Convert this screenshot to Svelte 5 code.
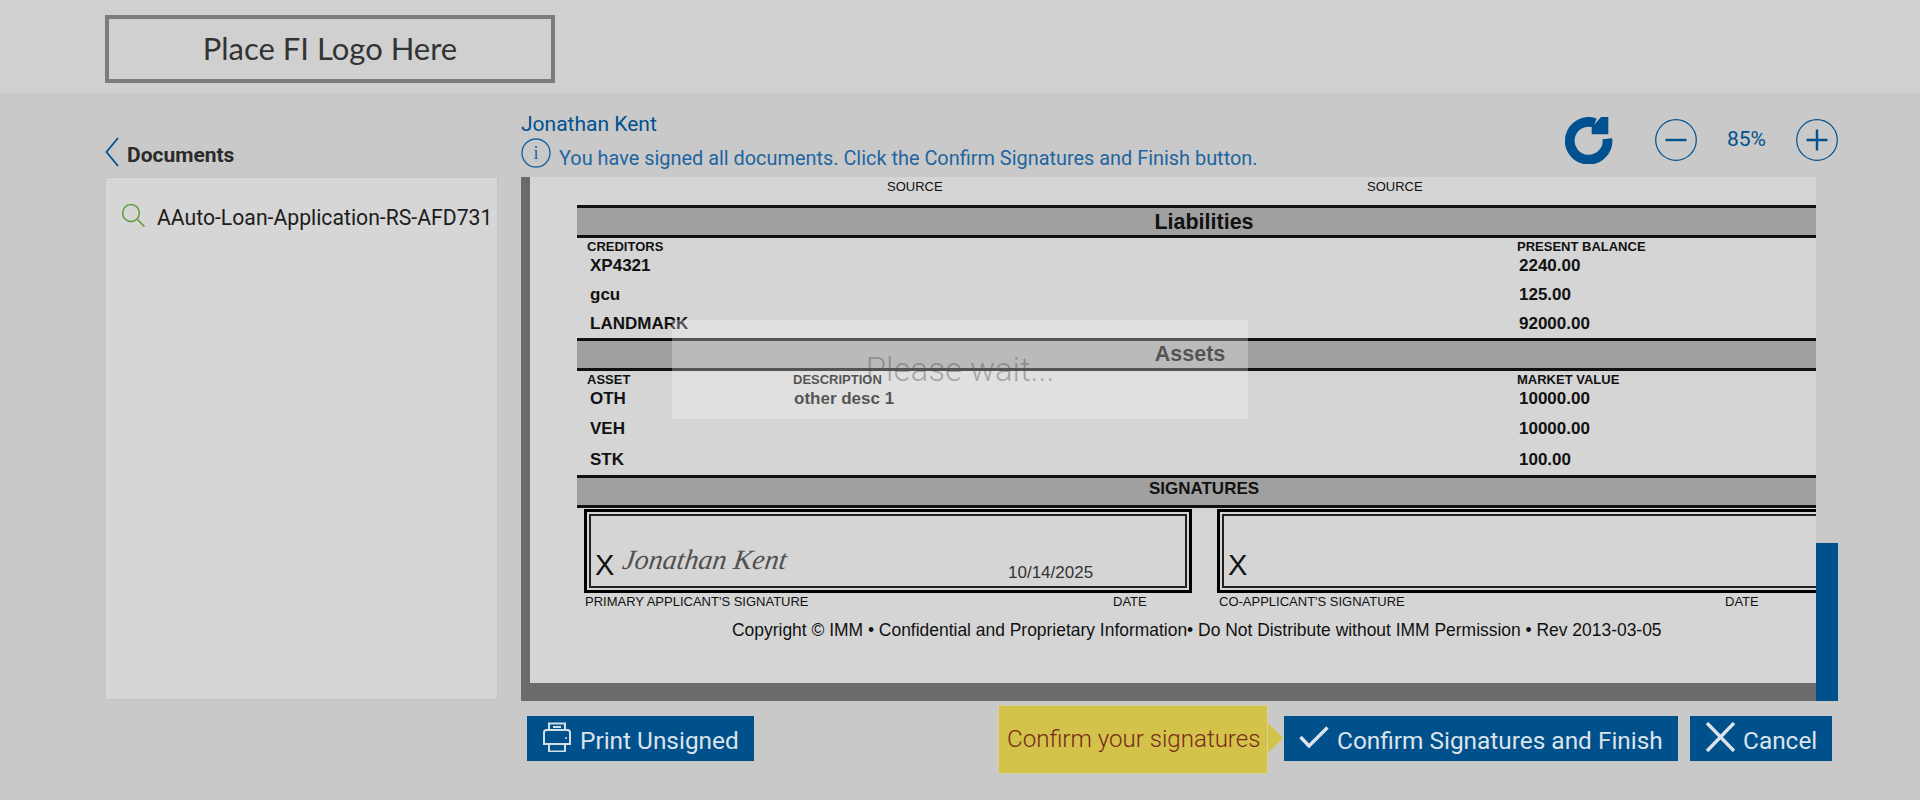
<script>
  const creditors = [
    { name: 'XP4321', value: '2240.00' },
    { name: 'gcu', value: '125.00' },
    { name: 'LANDMARK', value: '92000.00' }
  ];
  const assets = [
    { name: 'OTH', desc: 'other desc 1', value: '10000.00' },
    { name: 'VEH', desc: '', value: '10000.00' },
    { name: 'STK', desc: '', value: '100.00' }
  ];
</script>

<header class="top">
  <div class="logo">Place FI Logo Here</div>
</header>

<main class="page">
  <aside class="side">
    <div class="side-head">
      <svg class="chevron" viewBox="0 0 14 30" width="14" height="30">
        <path d="M13 1 1.500 15 13 29" fill="none" stroke="#00518f" stroke-width="1.8" />
      </svg>
      <span>Documents</span>
    </div>
    <div class="side-panel">
      <div class="doc-item">
        <svg viewBox="0 0 24 24" width="24" height="24">
          <circle cx="10" cy="10" r="8.4" fill="none" stroke="#5f9a3c" stroke-width="1.5" />
          <path d="m16 16 7.4 7.6" fill="none" stroke="#5f9a3c" stroke-width="1.5" />
        </svg>
        <span>AAuto-Loan-Application-RS-AFD731</span>
      </div>
    </div>
  </aside>

  <section class="content">
    <div class="content-head">
      <div class="who">
        <div class="name">Jonathan Kent</div>
        <div class="msg">
          <svg viewBox="0 0 30 30" width="30" height="30">
            <circle cx="15" cy="15" r="14" fill="none" stroke="#1f659f" stroke-width="1.4" />
            <text x="15" y="21" text-anchor="middle" class="info-i">i</text>
          </svg>
          <span>You have signed all documents. Click the Confirm Signatures and Finish button.</span>
        </div>
      </div>
      <div class="tools">
        <svg class="refresh" viewBox="0 0 48 47" width="48" height="47">
          <path d="M42.400 21.700A18.900 18.900 0 1 1 30 6" fill="none" stroke="#00518f" stroke-width="9.700" />
          <path d="M36 0h7.300v17.300H26.700v-6.600z" fill="#00518f" />
        </svg>
        <svg class="round" viewBox="0 0 42 42" width="42" height="42">
          <circle cx="21" cy="21" r="20.3" fill="none" stroke="#00518f" stroke-width="1.2" />
          <path d="M10.500 21h21" stroke="#00518f" stroke-width="2.4" />
        </svg>
        <span class="pct">85%</span>
        <svg class="round" viewBox="0 0 42 42" width="42" height="42">
          <circle cx="21" cy="21" r="20.3" fill="none" stroke="#00518f" stroke-width="1.2" />
          <path d="M10.500 21h21M21 10.500v21" stroke="#00518f" stroke-width="2.4" />
        </svg>
      </div>
    </div>

    <div class="viewer">
      <div class="doc-frame">
        <div class="doc">
          <div class="source-row"><span>SOURCE</span><span>SOURCE</span></div>

          <div class="bar liab-bar"><span class="big">Liabilities</span></div>
          <div class="cols labels"><span>CREDITORS</span><span></span><span>PRESENT BALANCE</span></div>
          {#each creditors as row}
            <div class="cols val"><span>{row.name}</span><span></span><span>{row.value}</span></div>
          {/each}

          <div class="bar assets-bar"><span class="big">Assets</span></div>
          <div class="cols labels"><span>ASSET</span><span>DESCRIPTION</span><span>MARKET VALUE</span></div>
          {#each assets as row}
            <div class="cols val tall"><span>{row.name}</span><span>{row.desc}</span><span>{row.value}</span></div>
          {/each}

          <div class="bar sig-bar"><span class="mid">SIGNATURES</span></div>

          <div class="sig-row">
            <div class="sig-col">
              <div class="sig-box">
                <div class="sig-inner">
                  <span class="x">X</span>
                  <span class="signed">Jonathan Kent</span>
                  <span class="date">10/14/2025</span>
                </div>
              </div>
              <div class="caption"><span>PRIMARY APPLICANT'S SIGNATURE</span><span>DATE</span></div>
            </div>
            <div class="sig-col">
              <div class="sig-box">
                <div class="sig-inner">
                  <span class="x">X</span>
                </div>
              </div>
              <div class="caption co"><span>CO-APPLICANT'S SIGNATURE</span><span>DATE</span></div>
            </div>
          </div>

          <p class="copy">Copyright © IMM • Confidential and Proprietary Information• Do Not Distribute without IMM Permission • Rev 2013-03-05</p>
        </div>
      </div>

      <div class="scroll"><div class="thumb"></div></div>

      <div class="wait">Please wait...</div>
    </div>

    <div class="actions">
      <button class="btn print">
        <svg viewBox="0 0 30 30" width="30" height="30">
          <path d="M7 8V1.500h16V8M7 22H2V10.500Q2 8 4.500 8h21Q28 8 28 10.500V22h-5" fill="none" stroke="#d5dde6" stroke-width="2" />
          <path d="M7 22h16v7.500H7zM11 5h8" fill="none" stroke="#d5dde6" stroke-width="2" />
          <circle cx="24" cy="16" r="1" fill="#d5dde6" />
        </svg>
        <span class="label">Print Unsigned</span>
      </button>
      <div class="hint">Confirm your signatures</div>
      <button class="btn confirm">
        <svg viewBox="0 0 30 22" width="30" height="22">
          <path d="M1.500 11 10 20 28.500 1.500" fill="none" stroke="#dde3ea" stroke-width="3.400" />
        </svg>
        <span class="label">Confirm Signatures and Finish</span>
      </button>
      <button class="btn cancel">
        <svg viewBox="0 0 31 30" width="31" height="30">
          <path d="M2 1l27 28M29 1 2 29" fill="none" stroke="#dde3ea" stroke-width="3.400" />
        </svg>
        <span class="label">Cancel</span>
      </button>
    </div>
  </section>
</main>

<style>
  :global(body) {
    background: #c9c9c9;
    font-family: Roboto, sans-serif;
  }

  .top {
    height: 93px;
    box-sizing: border-box;
    padding: 15px 0 0 105px;
    background: #d0d0d0;
  }

  .logo {
    width: 450px;
    height: 68px;
    box-sizing: border-box;
    border: 4px solid #7b7b7b;
    padding-bottom: 2px;
    display: flex;
    align-items: center;
    justify-content: center;
    font-family: Lato, sans-serif;
    font-size: 31px;
    color: #333;
  }

  .page {
    display: grid;
    grid-template-columns: 393px 1317px;
    gap: 23px;
    padding-left: 105px;
    height: 707px;
    overflow: hidden;
  }

  .side-head {
    height: 84px;
    box-sizing: border-box;
    padding-top: 43px;
    display: flex;
    align-items: flex-start;
    gap: 8px;
    font-size: 21px;
    font-weight: 700;
    color: #2b2b2b;
    line-height: 38px;
  }

  .chevron {
    margin-top: 1px;
    flex: none;
  }

  .side-panel {
    height: 523px;
    box-sizing: border-box;
    background: #d6d6d6;
    border: 1px solid #c2c2c2;
    padding: 25px 0 0 15px;
  }

  .doc-item {
    display: flex;
    align-items: center;
    gap: 12px;
    font-size: 21.200px;
    white-space: nowrap;
    color: #1c1c1c;
  }

  .doc-item svg {
    margin-bottom: 4px;
  }

  .content-head {
    height: 84px;
    display: flex;
    justify-content: space-between;
  }

  .name {
    margin-top: 19px;
    font-size: 21px;
    line-height: 24px;
    color: #00518f;
  }

  .msg {
    margin-top: 2px;
    display: flex;
    align-items: flex-start;
    gap: 8px;
    font-size: 19.900px;
    line-height: 36px;
    color: #1f659f;
  }

  .msg span {
    padding-top: 3px;
  }

  .info-i {
    font-family: "Liberation Serif", serif;
    font-size: 18px;
    fill: #1f659f;
  }

  .tools {
    display: flex;
    align-items: flex-start;
    padding-top: 24px;
  }

  .refresh {
    margin-right: 42px;
  }

  .round {
    margin-top: 2px;
  }

  .pct {
    width: 99px;
    text-align: center;
    font-size: 21px;
    line-height: 44px;
    color: #00518f;
  }

  .viewer {
    position: relative;
    display: flex;
    height: 524px;
  }

  .doc-frame {
    flex: 1;
    min-width: 0;
    overflow: hidden;
    background: #d5d5d5;
    border-left: 9px solid #6b6b6b;
    border-bottom: 18px solid #6b6b6b;
  }

  .doc {
    width: 1254px;
    margin-left: 47px;
    font-family: "Liberation Sans", Arial, sans-serif;
    color: #111;
  }

  .source-row {
    height: 28px;
    line-height: 20px;
    font-size: 13px;
    display: grid;
    grid-template-columns: 480px auto;
    padding-left: 310px;
  }

  .bar {
    height: 33px;
    box-sizing: border-box;
    background: #a0a0a0;
    border-top: 3px solid #111;
    border-bottom: 3px solid #111;
    display: flex;
    align-items: center;
    justify-content: center;
    font-weight: 700;
  }

  .liab-bar {
    padding-top: 2px;
  }

  .assets-bar {
    padding-right: 28px;
  }

  .sig-bar {
    padding-bottom: 4px;
  }

  .big {
    font-size: 21.500px;
  }

  .mid {
    font-size: 17px;
  }

  .cols {
    display: grid;
    grid-template-columns: 206px 724px auto;
    white-space: nowrap;
    font-weight: 700;
    padding-left: 10px;
  }

  .labels {
    height: 13px;
    line-height: 18px;
    font-size: 13px;
  }

  .val {
    height: 29px;
    align-items: center;
    font-size: 17px;
    padding-left: 13px;
    grid-template-columns: 204px 725px auto;
  }

  .tall {
    height: 30.333px;
  }

  .sig-row {
    display: flex;
    gap: 25px;
    padding: 1px 0 0 7px;
  }

  .sig-col {
    width: 608px;
    flex: none;
  }

  .sig-box {
    height: 84px;
    box-sizing: border-box;
    border: 3px solid #000;
    padding: 2px;
  }

  .sig-inner {
    height: 100%;
    box-sizing: border-box;
    border: 2px solid #222;
    padding: 0 0 0 4px;
    display: grid;
    grid-template-columns: 27px 386px auto;
    align-items: end;
    white-space: nowrap;
  }

  .x {
    font-size: 29px;
    line-height: 34px;
    padding-bottom: 4px;
  }

  .signed {
    font-family: "Liberation Serif", serif;
    font-style: italic;
    font-size: 28px;
    line-height: 38px;
    color: #505050;
    margin-left: -3px;
    padding-bottom: 7px;
    transform: skewX(-8deg);
    transform-origin: left bottom;
  }

  .date {
    font-size: 17px;
    line-height: 20px;
    color: #333;
    padding-bottom: 3px;
  }

  .caption {
    display: grid;
    grid-template-columns: 528px auto;
    font-size: 13px;
    line-height: 18px;
    padding-left: 1px;
    white-space: nowrap;
  }

  .co {
    grid-template-columns: 506px auto;
    padding-left: 2px;
  }

  .copy {
    margin: 9px 0 0;
    padding-left: 155px;
    font-size: 17.440px;
    line-height: 20px;
    white-space: nowrap;
  }

  .scroll {
    width: 22px;
    flex: none;
    display: flex;
    align-items: flex-end;
  }

  .thumb {
    width: 100%;
    height: 158px;
    background: #00508c;
  }

  .wait {
    position: absolute;
    left: 151px;
    top: 143px;
    width: 576px;
    height: 99px;
    box-sizing: border-box;
    padding-top: 30px;
    background: rgba(255, 255, 255, 0.28);
    text-align: center;
    font-weight: 300;
    font-size: 33px;
    line-height: 40px;
    color: rgba(80, 80, 80, 0.42);
  }

  .actions {
    display: flex;
    align-items: flex-start;
    height: 69px;
    margin-top: 4px;
    padding-left: 6px;
  }

  .btn {
    height: 45px;
    margin-top: 11px;
    border: none;
    padding: 0;
    display: flex;
    align-items: center;
    background: #00508c;
    color: #dde3ea;
    font-family: Roboto, sans-serif;
    font-size: 24.400px;
    white-space: nowrap;
  }

  .btn svg {
    margin-bottom: 3px;
  }

  .label {
    margin-top: 3px;
  }

  .print {
    width: 227px;
    padding-left: 15px;
    gap: 8px;
    margin-right: 244px;
  }

  .hint {
    position: relative;
    width: 270px;
    height: 69px;
    box-sizing: border-box;
    padding-left: 9px;
    background: #d3c34a;
    outline: 1px solid #d8d29a;
    outline-offset: -1px;
    color: #7a2a1a;
    font-weight: 300;
    font-size: 24.100px;
    line-height: 69px;
    white-space: nowrap;
    margin-right: 16px;
  }

  .hint::after {
    content: "";
    position: absolute;
    left: 100%;
    top: 18px;
    border-left: 15px solid #d3c34a;
    border-top: 15px solid transparent;
    border-bottom: 15px solid transparent;
  }

  .confirm {
    width: 394px;
    padding-left: 15px;
    gap: 8px;
    margin-right: 12px;
  }

  .cancel {
    width: 142px;
    padding-left: 15px;
    gap: 7px;
  }
</style>
